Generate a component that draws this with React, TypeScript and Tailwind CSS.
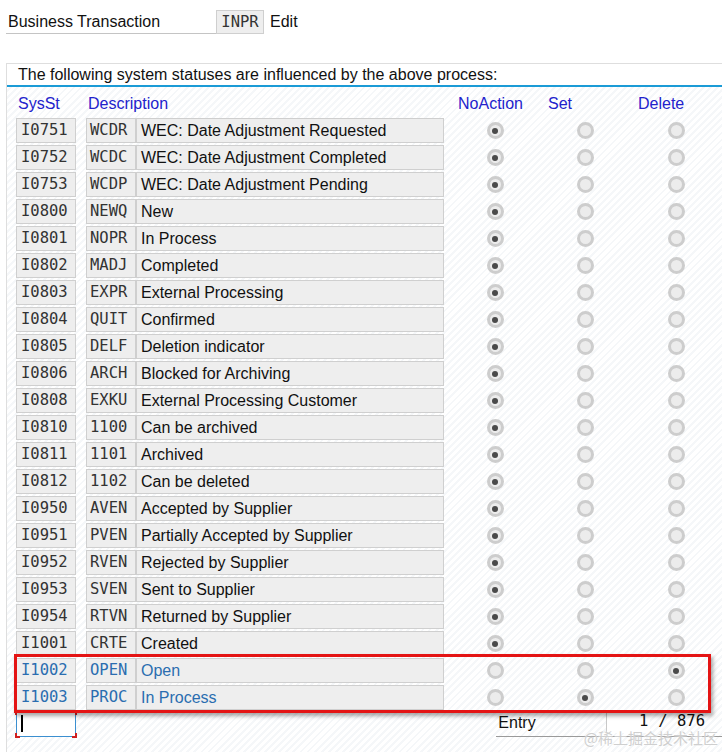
import React from 'react';

type Row = { id: string; code: string; text: string; sel: 0 | 1 | 2 };

const rows: Row[] = [
  { id: 'I0751', code: 'WCDR', text: 'WEC: Date Adjustment Requested', sel: 0 },
  { id: 'I0752', code: 'WCDC', text: 'WEC: Date Adjustment Completed', sel: 0 },
  { id: 'I0753', code: 'WCDP', text: 'WEC: Date Adjustment Pending', sel: 0 },
  { id: 'I0800', code: 'NEWQ', text: 'New', sel: 0 },
  { id: 'I0801', code: 'NOPR', text: 'In Process', sel: 0 },
  { id: 'I0802', code: 'MADJ', text: 'Completed', sel: 0 },
  { id: 'I0803', code: 'EXPR', text: 'External Processing', sel: 0 },
  { id: 'I0804', code: 'QUIT', text: 'Confirmed', sel: 0 },
  { id: 'I0805', code: 'DELF', text: 'Deletion indicator', sel: 0 },
  { id: 'I0806', code: 'ARCH', text: 'Blocked for Archiving', sel: 0 },
  { id: 'I0808', code: 'EXKU', text: 'External Processing Customer', sel: 0 },
  { id: 'I0810', code: '1100', text: 'Can be archived', sel: 0 },
  { id: 'I0811', code: '1101', text: 'Archived', sel: 0 },
  { id: 'I0812', code: '1102', text: 'Can be deleted', sel: 0 },
  { id: 'I0950', code: 'AVEN', text: 'Accepted by Supplier', sel: 0 },
  { id: 'I0951', code: 'PVEN', text: 'Partially Accepted by Supplier', sel: 0 },
  { id: 'I0952', code: 'RVEN', text: 'Rejected by Supplier', sel: 0 },
  { id: 'I0953', code: 'SVEN', text: 'Sent to Supplier', sel: 0 },
  { id: 'I0954', code: 'RTVN', text: 'Returned by Supplier', sel: 0 },
  { id: 'I1001', code: 'CRTE', text: 'Created', sel: 0 },
  { id: 'I1002', code: 'OPEN', text: 'Open', sel: 2 },
  { id: 'I1003', code: 'PROC', text: 'In Process', sel: 1 },
];

const sans = "font-['Liberation_Sans',Arial,sans-serif]";
const mono = "font-['DejaVu_Sans_Mono',monospace]";

const Radio = ({ on }: { on: boolean }) => (
  <div className="w-[17px] h-[17px] rounded-full border-[3px] border-[#cdcdcd] bg-[#ececec] flex items-center justify-center">
    {on && <div className="w-[6px] h-[6px] rounded-full bg-[#4a4a4a]" />}
  </div>
);

export default function App() {
  return (
    <div className={`relative w-[722px] h-[752px] overflow-hidden bg-white text-[16px] text-[#111] ${sans}`}>
      {/* header field */}
      <div className="flex items-end pt-[10px] pl-[6px] h-[34px]">
        <div className="w-[210px] h-[24px] border-b border-[#c4c4c4] pl-[2px] leading-[23px]">Business Transaction</div>
        <div className={`w-[48px] h-[24px] bg-[#eeeeee] border border-[#cfcfcf] text-center leading-[22px] text-[15.5px] text-[#333] ${mono}`}>INPR</div>
        <div className="pl-[6px] h-[24px] leading-[23px]">Edit</div>
      </div>

      {/* panel */}
      <div className="mt-[29px] ml-[6px] h-[689px] border-t border-l border-[#dedede] bg-[repeating-linear-gradient(135deg,#ffffff_0px,#ffffff_3px,#f5f7f9_3px,#f5f7f9_5px)]">
        <div className="h-[21px] bg-white pl-[11px] leading-[22px]">
          The following system statuses are influenced by the above process:
        </div>
        <div className="h-[2px] bg-[#1b9bd6]" />

        <div className="flex items-center h-[31px] pl-[9px] pt-[3px] text-[#2222cc]">
          <div className="w-[70px] pl-[2px]">SysSt</div>
          <div className="w-[358px] pl-[2px]">Description</div>
          <div className="w-[6px]" />
          <div className="w-[90px] pl-[8px]">NoAction</div>
          <div className="w-[90px] pl-[8px]">Set</div>
          <div className="w-[92px] pl-[8px]">Delete</div>
        </div>

        <div className="flex flex-col gap-[2px] pl-[9px]">
          {rows.map((r) => {
            const hl = r.sel !== 0;
            const color = hl ? 'text-[#2a6db0]' : 'text-[#111]';
            return (
              <div key={r.id} className="flex items-center h-[25px]">
                <div className={`w-[60px] h-[25px] bg-[#eeeeee] border border-[#cfcfcf] pl-[4px] leading-[23px] text-[15.5px] ${mono} ${hl ? 'text-[#2a6db0]' : 'text-[#333]'}`}>
                  {r.id}
                </div>
                <div className="w-[10px]" />
                <div className={`w-[50px] h-[25px] bg-[#eeeeee] border border-[#cfcfcf] pl-[3px] leading-[23px] text-[15.5px] ${mono} ${hl ? 'text-[#2a6db0]' : 'text-[#333]'}`}>
                  {r.code}
                </div>
                <div className={`w-[308px] h-[25px] bg-[#eeeeee] border border-[#cfcfcf] pl-[4px] leading-[24px] ${color}`}>
                  {r.text}
                </div>
                <div className="w-[6px]" />
                <div className="w-[90px] flex justify-center"><Radio on={r.sel === 0} /></div>
                <div className="w-[90px] flex justify-center"><Radio on={r.sel === 1} /></div>
                <div className="w-[92px] flex justify-center"><Radio on={r.sel === 2} /></div>
              </div>
            );
          })}
        </div>

        {/* entry line */}
        <div className="flex items-start mt-[1px] h-[27px] pl-[9px]">
          <div className="relative w-[60px] h-[26px] bg-white border border-[#3b8fd0]">
            <div className="absolute left-[4px] top-[3px] w-[2px] h-[17px] bg-black" />
            <div className="absolute -left-[2px] -top-[2px] w-[5px] h-[5px] border-l-2 border-t-2 border-[#d02020]" />
            <div className="absolute -right-[2px] -top-[2px] w-[5px] h-[5px] border-r-2 border-t-2 border-[#d02020]" />
            <div className="absolute -left-[2px] -bottom-[2px] w-[5px] h-[5px] border-l-2 border-b-2 border-[#d02020]" />
            <div className="absolute -right-[2px] -bottom-[2px] w-[5px] h-[5px] border-r-2 border-b-2 border-[#d02020]" />
          </div>
          <div className="w-[421px]" />
          <div className="flex items-end h-[26px] w-[226px] border-b border-[#9a9a9a]">
            <div className="w-[110px] pl-[2px] leading-[24px] self-start">Entry</div>
            <div className={`w-[44px] h-[20px] self-start mt-[2px] bg-white border-l border-[#c8c8c8] text-right pr-[2px] leading-[16px] text-[15.5px] ${mono}`}>1</div>
            <div className={`pl-[8px] self-start mt-[2px] leading-[16px] text-[15.5px] ${mono}`}>/ 876</div>
          </div>
        </div>
      </div>

      {/* highlight annotation */}
      <div className="absolute left-[14px] top-[654px] w-[697px] h-[59px] border-[3px] border-[#e41414] shadow-[2px_3px_4px_rgba(0,0,0,0.35)]" />

      {/* watermark */}
      <div className="absolute right-[4px] bottom-[7px] text-[15px] text-[#cfcfcf] font-['Noto_Sans_CJK_SC',sans-serif] leading-[14px] [text-shadow:0_0_2px_#fff]">
        @稀土掘金技术社区
      </div>
    </div>
  );
}
